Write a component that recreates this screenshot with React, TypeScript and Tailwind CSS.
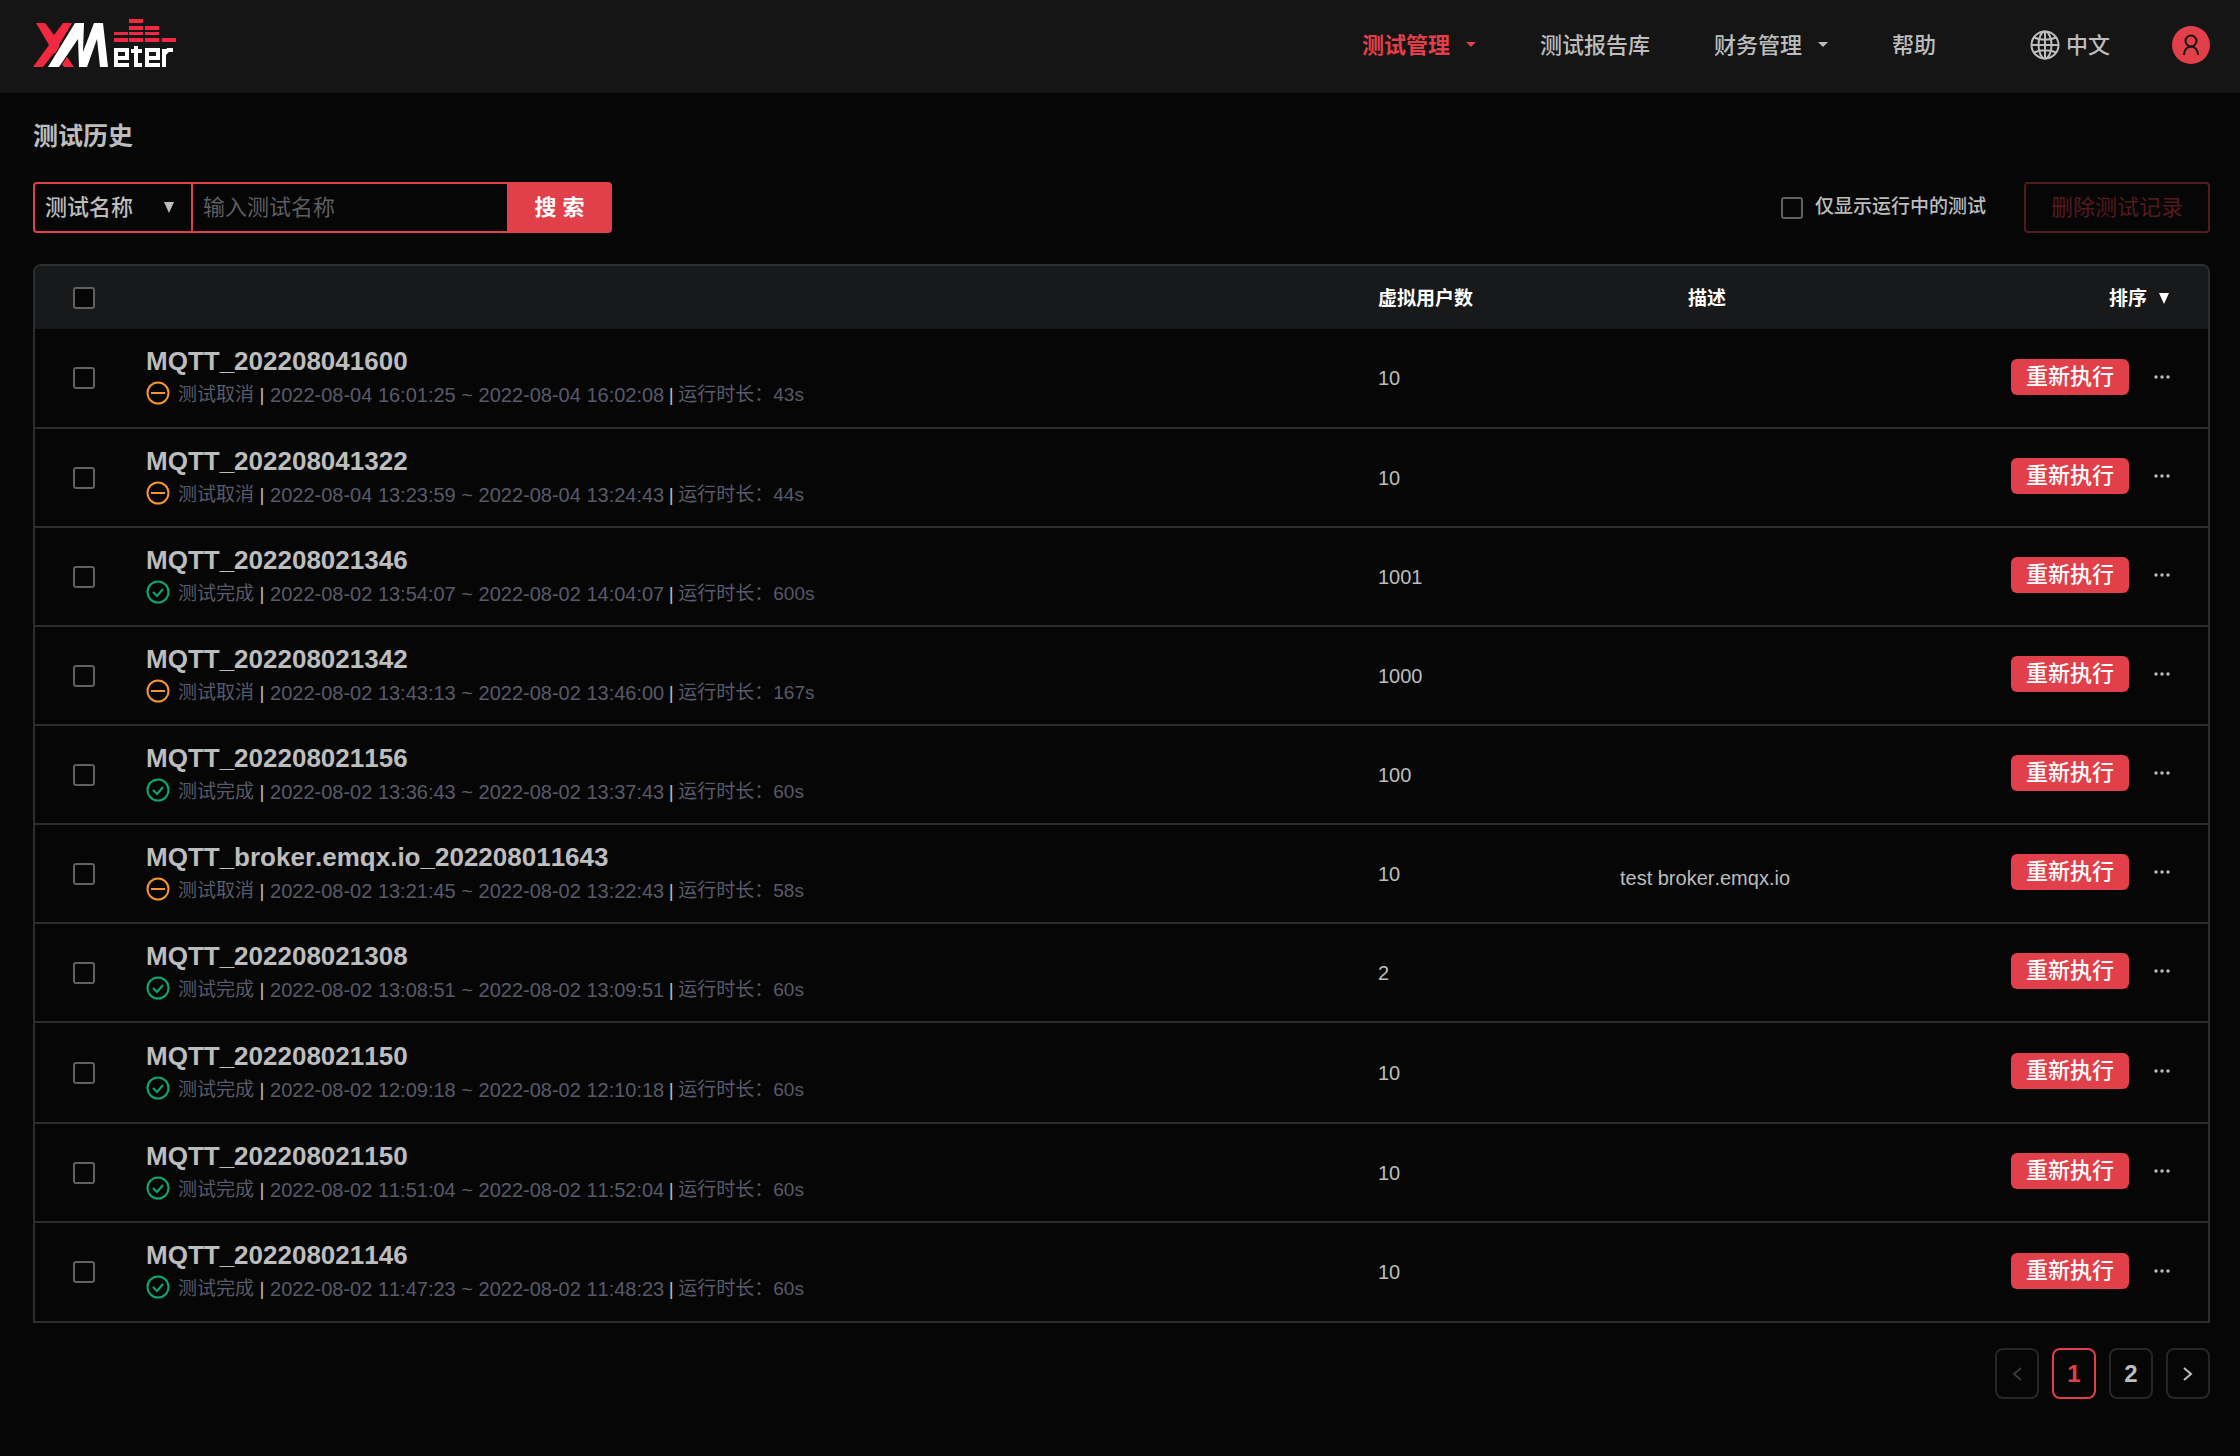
import React from "react";

type Status = "cancelled" | "completed";

interface TestRecord {
  id: number;
  name: string;
  status: Status;
  period: string;
  duration: string;
  users: number;
  description?: string;
}

const records: TestRecord[] = [
  { id: 1, name: "MQTT_202208041600", status: "cancelled", period: "2022-08-04 16:01:25 ~ 2022-08-04 16:02:08", duration: "43s", users: 10 },
  { id: 2, name: "MQTT_202208041322", status: "cancelled", period: "2022-08-04 13:23:59 ~ 2022-08-04 13:24:43", duration: "44s", users: 10 },
  { id: 3, name: "MQTT_202208021346", status: "completed", period: "2022-08-02 13:54:07 ~ 2022-08-02 14:04:07", duration: "600s", users: 1001 },
  { id: 4, name: "MQTT_202208021342", status: "cancelled", period: "2022-08-02 13:43:13 ~ 2022-08-02 13:46:00", duration: "167s", users: 1000 },
  { id: 5, name: "MQTT_202208021156", status: "completed", period: "2022-08-02 13:36:43 ~ 2022-08-02 13:37:43", duration: "60s", users: 100 },
  { id: 6, name: "MQTT_broker.emqx.io_202208011643", status: "cancelled", period: "2022-08-02 13:21:45 ~ 2022-08-02 13:22:43", duration: "58s", users: 10, description: "test broker.emqx.io" },
  { id: 7, name: "MQTT_202208021308", status: "completed", period: "2022-08-02 13:08:51 ~ 2022-08-02 13:09:51", duration: "60s", users: 2 },
  { id: 8, name: "MQTT_202208021150", status: "completed", period: "2022-08-02 12:09:18 ~ 2022-08-02 12:10:18", duration: "60s", users: 10 },
  { id: 9, name: "MQTT_202208021150", status: "completed", period: "2022-08-02 11:51:04 ~ 2022-08-02 11:52:04", duration: "60s", users: 10 },
  { id: 10, name: "MQTT_202208021146", status: "completed", period: "2022-08-02 11:47:23 ~ 2022-08-02 11:48:23", duration: "60s", users: 10 },
];

const statusText: Record<Status, string> = { cancelled: "测试取消", completed: "测试完成" };

function Logo() {
  return (
    <svg width="144" height="52" viewBox="0 0 144 52" role="img" aria-label="XMeter">
      <path fill="#f1283f" d="M3 6h9l9 12 9-12h9L26 28l15 22H31L21 36 10 50H0l16-22z" />
      <path
        fill="#fff"
        stroke="#151515"
        strokeWidth="2"
        style={{ paintOrder: "stroke" }}
        d="M15 50 42 6h9l-1 29L61 6h9l5 44h-8l-3-28-10 28h-8l-1-28-19 28z"
      />
      <path
        fill="#f1283f"
        d="M96 2h14v4H96zM96 9h14v4H96zM112 9h14v4h-14zM81 15h14v3H81zM96 15h14v3H96zM112 15h14v3h-14zM81 21h14v4H81zM96 21h14v4H96zM112 21h14v4h-14zM129 21h14v4h-14z"
      />
      <g fill="none" stroke="#fff" strokeWidth="4">
        <path d="M96 48H83V33h11v8H84" />
        <path d="M103 29v19h6M98 34h11" />
        <path d="M127 48h-13V33h11v8h-10" />
        <path d="M131 50V32M131 37l4-4h5" />
      </g>
    </svg>
  );
}

function Caret() {
  return (
    <svg width="10" height="6" viewBox="0 0 10 6" fill="currentColor" aria-hidden="true">
      <path d="M0 0h10L5 5z" />
    </svg>
  );
}

function Globe() {
  return (
    <svg width="30" height="30" viewBox="0 0 30 30" fill="none" stroke="currentColor" strokeWidth="2" aria-hidden="true">
      <circle cx="15" cy="15" r="13.5" />
      <ellipse cx="15" cy="15" rx="6.5" ry="13.5" />
      <path d="M15 1v28M1 15h28M4 7.5c6 3 16 3 22 0M4 22.5c6-3 16-3 22 0" />
    </svg>
  );
}

function StatusIcon({ status }: { status: Status }) {
  return status === "cancelled" ? (
    <svg className="-mt-1 text-[#f59432]" width="24" height="24" viewBox="0 0 24 24" fill="none" stroke="currentColor" strokeWidth="2" aria-hidden="true">
      <circle cx="12" cy="12" r="10.5" />
      <path d="M5 12h14" />
    </svg>
  ) : (
    <svg className="-mt-1 text-[#0bab70]" width="24" height="24" viewBox="0 0 24 24" fill="none" stroke="currentColor" strokeWidth="2" aria-hidden="true">
      <circle cx="12" cy="12" r="10.5" />
      <path d="m7 12 4 4 6-7" />
    </svg>
  );
}

function Checkbox({ id, label }: { id: string; label?: string }) {
  return (
    <input
      id={id}
      type="checkbox"
      aria-label={label}
      className="block size-[22px] shrink-0 appearance-none rounded-[3px] border-2 border-[#606060] bg-[#060606] checked:bg-[#e13f49]"
    />
  );
}

function NavLink({ children, active, menu }: { children: React.ReactNode; active?: boolean; menu?: boolean }) {
  return (
    <a href="#" className={active ? "flex items-center gap-4 font-bold text-[#e13f49]" : "flex items-center gap-4 font-medium"}>
      {children}
      {menu && <Caret />}
    </a>
  );
}

function Row({ record }: { record: TestRecord }) {
  return (
    <tr className="h-[99px] border-b-2 border-[#2c2d2e] last:border-b-0 nth-8:h-[101px]">
      <td className="pl-[38px]">
        <Checkbox id={`record-${record.id}`} label={record.name} />
      </td>
      <td className="pb-0.5">
        <div className="mb-1 text-[26px] leading-8 font-bold">{record.name}</div>
        <div className="flex items-center text-[19px] leading-7 text-[#585a6a]">
          <StatusIcon status={record.status} />
          <span className="ml-2">{statusText[record.status]}</span>
          <span className="mx-1 w-2 text-center text-[#bdbdbd]">|</span>
          <span className="text-[20px]">{record.period}</span>
          <span className="mx-[3px] w-2 text-center text-[#bdbdbd]">|</span>
          <span>运行时长：{record.duration}</span>
        </div>
      </td>
      <td className="text-[20px]">{record.users}</td>
      <td className="pt-2 text-center text-[20px]">{record.description}</td>
      <td className="pr-[38px] pb-[3px]">
        <div className="flex items-center justify-end gap-[25px]">
          <button type="button" className="h-9 rounded-md bg-[#e13f49] px-[15px] text-[22px] leading-9 font-medium text-white">
            重新执行
          </button>
          <button type="button" aria-label="更多">
            <svg width="16" height="6" viewBox="0 0 16 6" fill="currentColor" aria-hidden="true">
              <circle cx="2" cy="3" r="1.7" />
              <circle cx="8" cy="3" r="1.7" />
              <circle cx="14" cy="3" r="1.7" />
            </svg>
          </button>
        </div>
      </td>
    </tr>
  );
}

const pageButton = "flex h-[51px] w-11 items-center justify-center rounded-lg border-2";

export default function App() {
  return (
    <div className="min-h-screen bg-[#060606] font-['Liberation_Sans','Noto_Sans_CJK_SC',sans-serif] text-[#bdbdbd] [font-kerning:none]">
      <header className="flex h-[93px] items-center justify-between bg-[#151515] pr-[30px] pl-[33px]">
        <a href="#" className="mb-[7px]">
          <Logo />
        </a>
        <nav className="flex items-center gap-16 pb-[3px] text-[22px]">
          <NavLink active menu>测试管理</NavLink>
          <NavLink>测试报告库</NavLink>
          <NavLink menu>财务管理</NavLink>
          <NavLink>帮助</NavLink>
          <a href="#" className="-mr-0.5 ml-[30px] flex items-center gap-[6px] font-medium">
            <Globe />
            中文
          </a>
          <button type="button" aria-label="用户" className="flex size-[38px] items-center justify-center rounded-full bg-[#e13f49] text-[#151515]">
            <svg width="20" height="22" viewBox="0 0 20 22" fill="none" stroke="currentColor" strokeWidth="2" aria-hidden="true">
              <circle cx="10" cy="7" r="5.5" />
              <path d="M3 21c0-5 3-8.500 7-8.500s7 3.500 7 8.500" />
            </svg>
          </button>
        </nav>
      </header>

      <main className="pr-[30px] pl-[33px]">
        <h1 className="pt-[25px] text-[25px] leading-9 font-bold">测试历史</h1>

        <div className="mt-7 flex items-center justify-between">
          <form className="flex h-[51px] text-[22px]" onSubmit={(e) => e.preventDefault()}>
            <div className="relative">
              <select aria-label="搜索字段" className="h-full w-40 appearance-none rounded-l border-2 border-[#e13f49] bg-transparent pl-[10px] font-medium">
                <option>测试名称</option>
              </select>
              <svg className="pointer-events-none absolute top-5 right-[18px]" width="12" height="12" viewBox="0 0 12 12" fill="currentColor" aria-hidden="true">
                <path d="M1 0h10L6 11z" />
              </svg>
            </div>
            <input
              type="text"
              aria-label="测试名称"
              placeholder="输入测试名称"
              className="w-[314px] border-y-2 border-[#e13f49] bg-transparent pl-[10px] placeholder:text-[#5e5e62]"
            />
            <button type="submit" className="w-[105px] rounded-r bg-[#e13f49] font-bold text-white">搜 索</button>
          </form>
          <div className="flex items-center gap-[38px]">
            <label htmlFor="running-only" className="flex items-center gap-3 text-[19px] font-medium">
              <Checkbox id="running-only" />
              仅显示运行中的测试
            </label>
            <button type="button" disabled className="h-[51px] rounded border-2 border-[#551a1d] px-[25px] text-[22px] text-[#551a1d]">
              删除测试记录
            </button>
          </div>
        </div>

        <div className="mt-[31px] overflow-hidden rounded-t-lg border-2 border-[#2c2d2e]">
          <table className="w-full table-fixed border-collapse text-left">
            <colgroup>
              <col className="w-[111px]" />
              <col />
              <col className="w-[217px]" />
              <col className="w-[220px]" />
              <col className="w-[393px]" />
            </colgroup>
            <thead>
              <tr className="h-[63px] bg-[#18191a] text-[19px] font-bold text-white">
                <th className="pl-[38px]">
                  <Checkbox id="select-all" label="全选" />
                </th>
                <th />
                <th className="pt-[3px]">虚拟用户数</th>
                <th className="pt-[3px] pl-1 text-center">描述</th>
                <th className="pt-[3px] pr-[38px]">
                  <button type="button" className="ml-auto flex items-center gap-[11px]">
                    排序
                    <svg width="12" height="12" viewBox="0 0 12 12" fill="currentColor" aria-hidden="true">
                      <path d="M1 0h10L6 11z" />
                    </svg>
                  </button>
                </th>
              </tr>
            </thead>
            <tbody>
              {records.map((record) => (
                <Row key={record.id} record={record} />
              ))}
            </tbody>
          </table>
        </div>

        <nav aria-label="分页" className="mt-[25px] flex justify-end gap-[13px] text-[24px] font-bold">
          <button type="button" disabled aria-label="上一页" className={`${pageButton} border-[#252628] text-[#37383c]`}>
            <svg width="10" height="14" viewBox="0 0 10 14" fill="none" stroke="currentColor" strokeWidth="2" aria-hidden="true">
              <path d="M9 1 2 7l7 6" />
            </svg>
          </button>
          <button type="button" aria-current="page" className={`${pageButton} border-[#e13f49] text-[#e13f49]`}>1</button>
          <button type="button" className={`${pageButton} border-[#252628]`}>2</button>
          <button type="button" aria-label="下一页" className={`${pageButton} border-[#252628]`}>
            <svg width="10" height="14" viewBox="0 0 10 14" fill="none" stroke="currentColor" strokeWidth="2" aria-hidden="true">
              <path d="m1 1 7 6-7 6" />
            </svg>
          </button>
        </nav>
      </main>
    </div>
  );
}
